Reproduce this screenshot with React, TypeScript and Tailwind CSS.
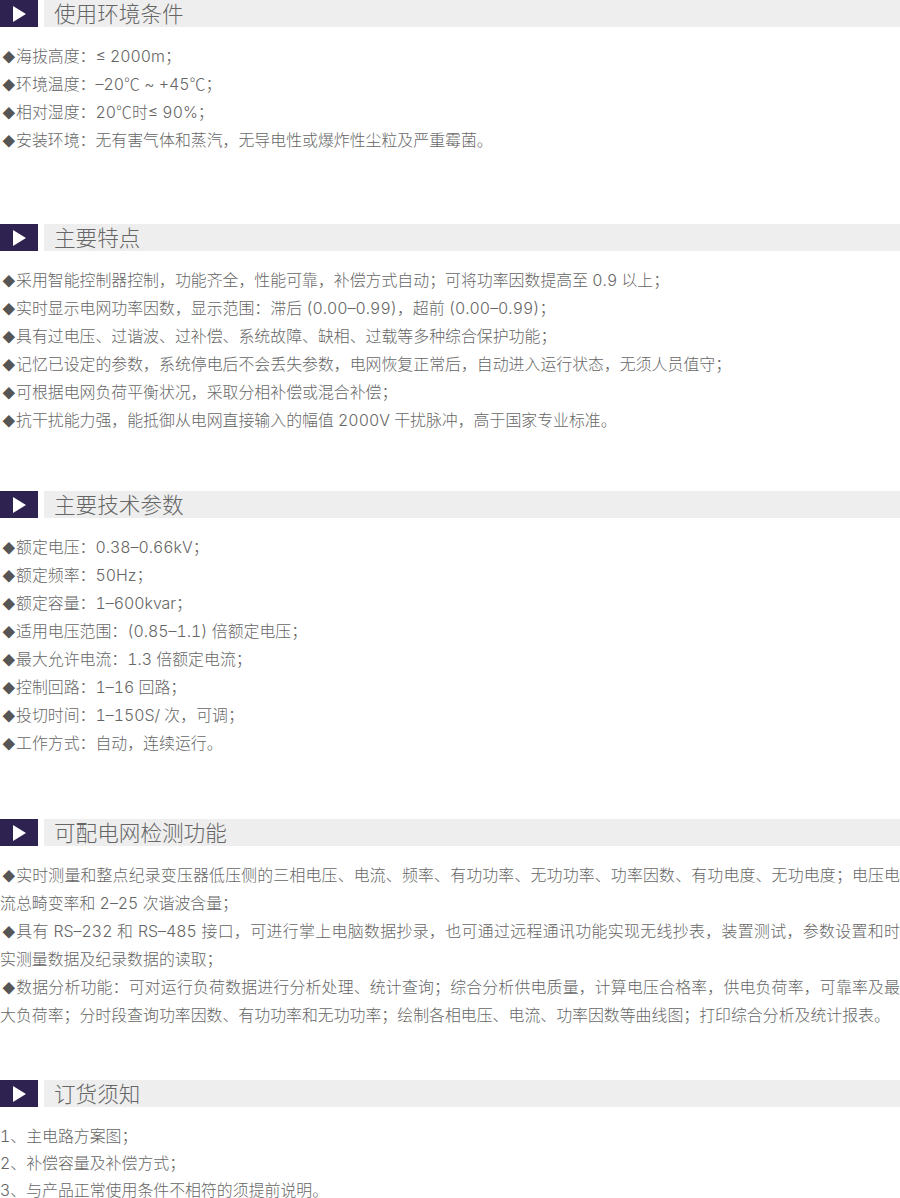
const sections = [
  {
    title: '使用环境条件',
    gap: 'mb-[69px]',
    lines: [
      '海拔高度：≤ 2000m；',
      '环境温度：–20℃ ~ +45℃；',
      '相对湿度：20℃时≤ 90%；',
      '安装环境：无有害气体和蒸汽，无导电性或爆炸性尘粒及严重霉菌。',
    ],
  },
  {
    title: '主要特点',
    gap: 'mb-[56px]',
    lines: [
      '采用智能控制器控制，功能齐全，性能可靠，补偿方式自动；可将功率因数提高至 0.9 以上；',
      '实时显示电网功率因数，显示范围：滞后 (0.00–0.99)，超前 (0.00–0.99)；',
      '具有过电压、过谐波、过补偿、系统故障、缺相、过载等多种综合保护功能；',
      '记忆已设定的参数，系统停电后不会丢失参数，电网恢复正常后，自动进入运行状态，无须人员值守；',
      '可根据电网负荷平衡状况，采取分相补偿或混合补偿；',
      '抗干扰能力强，能抵御从电网直接输入的幅值 2000V 干扰脉冲，高于国家专业标准。',
    ],
  },
  {
    title: '主要技术参数',
    gap: 'mb-[61px]',
    lines: [
      '额定电压：0.38–0.66kV；',
      '额定频率：50Hz；',
      '额定容量：1–600kvar；',
      '适用电压范围：(0.85–1.1) 倍额定电压；',
      '最大允许电流：1.3 倍额定电流；',
      '控制回路：1–16 回路；',
      '投切时间：1–150S/ 次，可调；',
      '工作方式：自动，连续运行。',
    ],
  },
  {
    title: '可配电网检测功能',
    gap: 'mb-[50px]',
    lines: [
      '实时测量和整点纪录变压器低压侧的三相电压、电流、频率、有功功率、无功功率、功率因数、有功电度、无功电度；电压电流总畸变率和 2–25 次谐波含量；',
      '具有 RS–232 和 RS–485 接口，可进行掌上电脑数据抄录，也可通过远程通讯功能实现无线抄表，装置测试，参数设置和时\n实测量数据及纪录数据的读取；',
      '数据分析功能：可对运行负荷数据进行分析处理、统计查询；综合分析供电质量，计算电压合格率，供电负荷率，可靠率及最大负荷率；分时段查询功率因数、有功功率和无功功率；绘制各相电压、电流、功率因数等曲线图；打印综合分析及统计报表。',
    ],
  },
  {
    title: '订货须知',
    gap: '',
    plain: true,
    lines: ['1、主电路方案图；', '2、补偿容量及补偿方式；', '3、与产品正常使用条件不相符的须提前说明。'],
  },
];

// Inter draws the degree sign as °C, the picture has the CJK glyph
function Degrees({ text }: { text: string }) {
  const parts = text.split('℃');
  return (
    <>
      {parts.map((part, i) => (
        <span key={i}>
          {i > 0 && <span className="font-['Noto_Sans_CJK_SC',sans-serif] leading-none">℃</span>}
          {part}
        </span>
      ))}
    </>
  );
}

function Line({ text, plain }: { text: string; plain?: boolean }) {
  const [first, rest] = text.split('\n');
  const mark = !plain && (
    <span className="inline-block w-[16px] pl-[2px] text-[13px] leading-none text-[#555555]">◆</span>
  );
  if (rest) {
    return (
      <p>
        <span className="block text-justify [text-align-last:justify]">
          {mark}
          {first}
        </span>
        <span className="block">{rest}</span>
      </p>
    );
  }
  return (
    <p className="text-justify">
      {mark}
      <Degrees text={first} />
    </p>
  );
}

function SectionHeader({ title }: { title: string }) {
  return (
    <div className="flex h-[27px] gap-[6px]">
      <div className="flex w-[38px] items-center justify-center bg-[#2e2250]">
        <svg width="13" height="16" viewBox="0 0 13 16">
          <path d="M0 0 L13 8 L0 16 Z" fill="#ffffff" />
        </svg>
      </div>
      <div className="flex-1 bg-[#eeeeee] pl-[10px] pt-[1px] text-[21.6px] leading-[27px] text-[#666666]">{title}</div>
    </div>
  );
}

export default function App() {
  return (
    <div className="h-[1198px] w-[900px] overflow-hidden bg-white font-['Inter','Noto_Sans_CJK_SC',sans-serif] font-light tabular-nums">
      {sections.map((s) => (
        <section key={s.title} className={s.gap}>
          <SectionHeader title={s.title} />
          <div className={`pt-[16px] text-[15.9px] text-[#666666] ${s.plain ? 'leading-[27px]' : 'leading-[28px]'}`}>
            {s.lines.map((line) => (
              <Line key={line} text={line} plain={s.plain} />
            ))}
          </div>
        </section>
      ))}
    </div>
  );
}
